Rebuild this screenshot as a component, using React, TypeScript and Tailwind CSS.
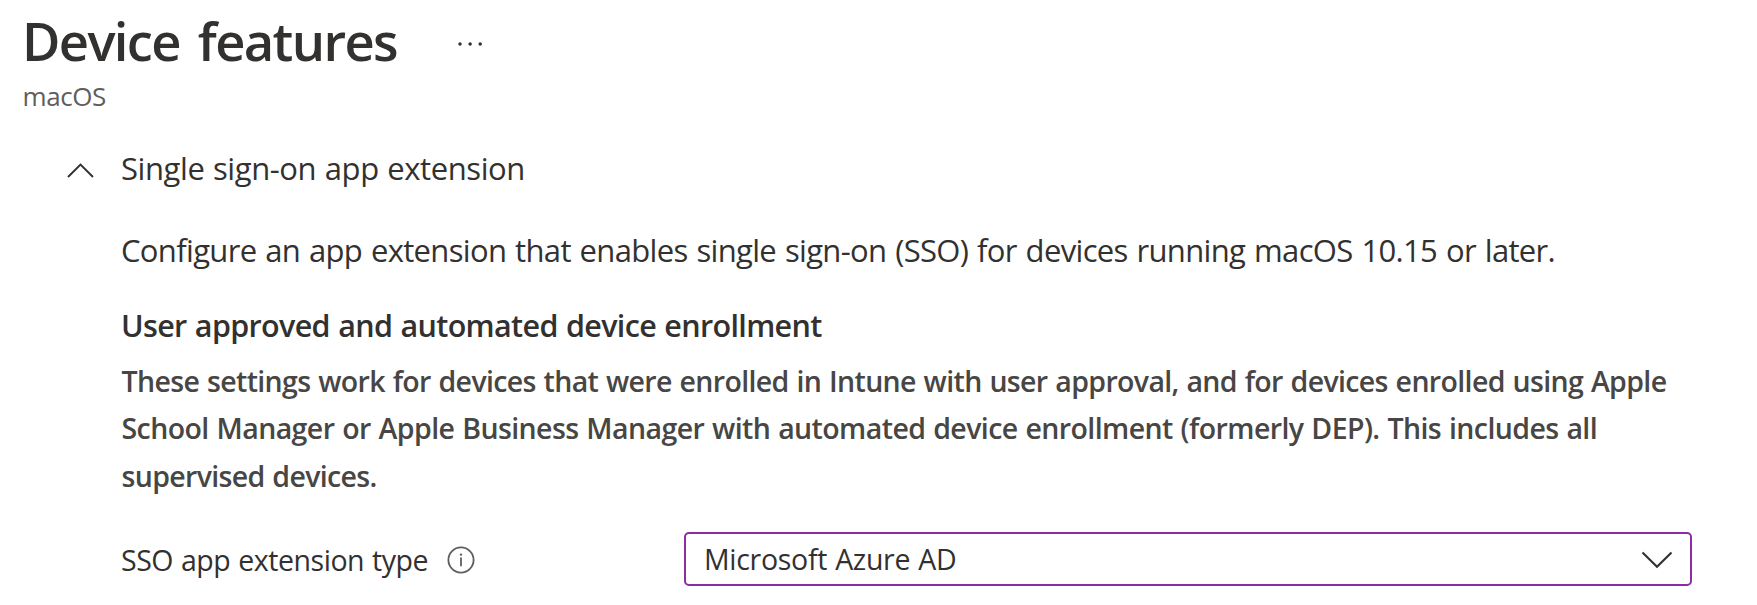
function MoreDots() {
  return (
    <svg width="28" height="8" viewBox="0 0 28 8" fill="#323130" aria-hidden="true">
      <circle cx="3" cy="4" r="1.75" />
      <circle cx="13.1" cy="4" r="1.75" />
      <circle cx="23.2" cy="4" r="1.75" />
    </svg>
  );
}

function ChevronUp() {
  return (
    <svg width="28" height="16" viewBox="0 0 28 16" fill="none" stroke="#323130" strokeWidth="1.9" aria-hidden="true">
      <path d="M1 14 13.5 1.6 26 14" />
    </svg>
  );
}

function ChevronDown() {
  return (
    <svg width="32" height="18" viewBox="0 0 32 18" fill="none" stroke="#323130" strokeWidth="2.1" aria-hidden="true">
      <path d="M1.5 1.5 16 15.7 30.5 1.5" />
    </svg>
  );
}

function InfoIcon() {
  return (
    <svg width="28" height="28" viewBox="0 0 28 28" fill="none" stroke="#605e5c" aria-hidden="true">
      <circle cx="14" cy="14" r="12.6" strokeWidth="1.8" />
      <path d="M14 11.4V20.2" strokeWidth="1.8" />
      <circle cx="14" cy="8.6" r="1.2" fill="#605e5c" stroke="none" />
    </svg>
  );
}

export default function App() {
  return (
    <main className="h-[605px] w-[1757px] overflow-hidden bg-white pt-1 font-['Open_Sans','Noto_Sans',sans-serif] text-[#323130]">
      <header className="pl-[22px]">
        <div className="flex h-[73px] items-center">
          <h1 className="w-[435px] text-[52.5px] leading-[72px] font-semibold tracking-[-1.65px] [word-spacing:6px] whitespace-nowrap">
            Device features
          </h1>
          <button type="button" aria-label="More" className="mt-[6px]">
            <MoreDots />
          </button>
        </div>
        <p className="mt-px pl-[0.5px] text-[26px] leading-9 tracking-[-0.4px] text-[#605e5c]">macOS</p>
      </header>

      <section className="mt-[34px] pl-[67px]">
        <div className="flex h-10 items-center">
          <div className="mt-[5px] w-[54px]">
            <ChevronUp />
          </div>
          <h2 className="text-[31px] leading-10 tracking-[-0.42px] [word-spacing:1px]">Single sign-on app extension</h2>
        </div>

        <div className="pl-[53.5px]">
          <p className="mt-[42px] pl-[0.5px] text-[31px] leading-10 tracking-[-0.66px] [word-spacing:1.4px] whitespace-nowrap">
            Configure an app extension that enables single sign-on (SSO) for devices running macOS 10.15 or later.
          </p>
          <h3 className="mt-[35px] pl-[0.5px] text-[30.5px] leading-10 font-semibold tracking-[-0.66px] [word-spacing:1px]">
            User approved and automated device enrollment
          </h3>
          <p className="mt-[13px] pl-px text-[28.5px] leading-[47.3px] font-semibold whitespace-nowrap text-[#484644]">
            <span className="block tracking-[-0.64px] [word-spacing:1px]">
              These settings work for devices that were enrolled in Intune with user approval, and for devices enrolled using Apple
            </span>
            <span className="block tracking-[-0.58px] [word-spacing:1px]">
              School Manager or Apple Business Manager with automated device enrollment (formerly DEP). This includes all
            </span>
            <span className="block tracking-[-0.66px] [word-spacing:1px]">supervised devices.</span>
          </p>

          <div className="mt-8 flex h-[54px] items-center">
            <div className="flex w-[563.5px] items-center gap-[19px] pl-[0.5px]">
              <span className="pt-[2px] text-[28.5px] leading-10 tracking-[-0.46px] [word-spacing:1px]">
                SSO app extension type
              </span>
              <span className="mt-[3px]">
                <InfoIcon />
              </span>
            </div>
            <button
              type="button"
              className="flex h-[54px] w-[1008px] items-center justify-between rounded-[5px] border-2 border-[#8a2da5] pr-[17px] pl-[18px]"
            >
              <span className="text-[28.5px] leading-10 tracking-[-0.3px] [word-spacing:1px]">Microsoft Azure AD</span>
              <span className="mt-[3px]">
                <ChevronDown />
              </span>
            </button>
          </div>
        </div>
      </section>
    </main>
  );
}
